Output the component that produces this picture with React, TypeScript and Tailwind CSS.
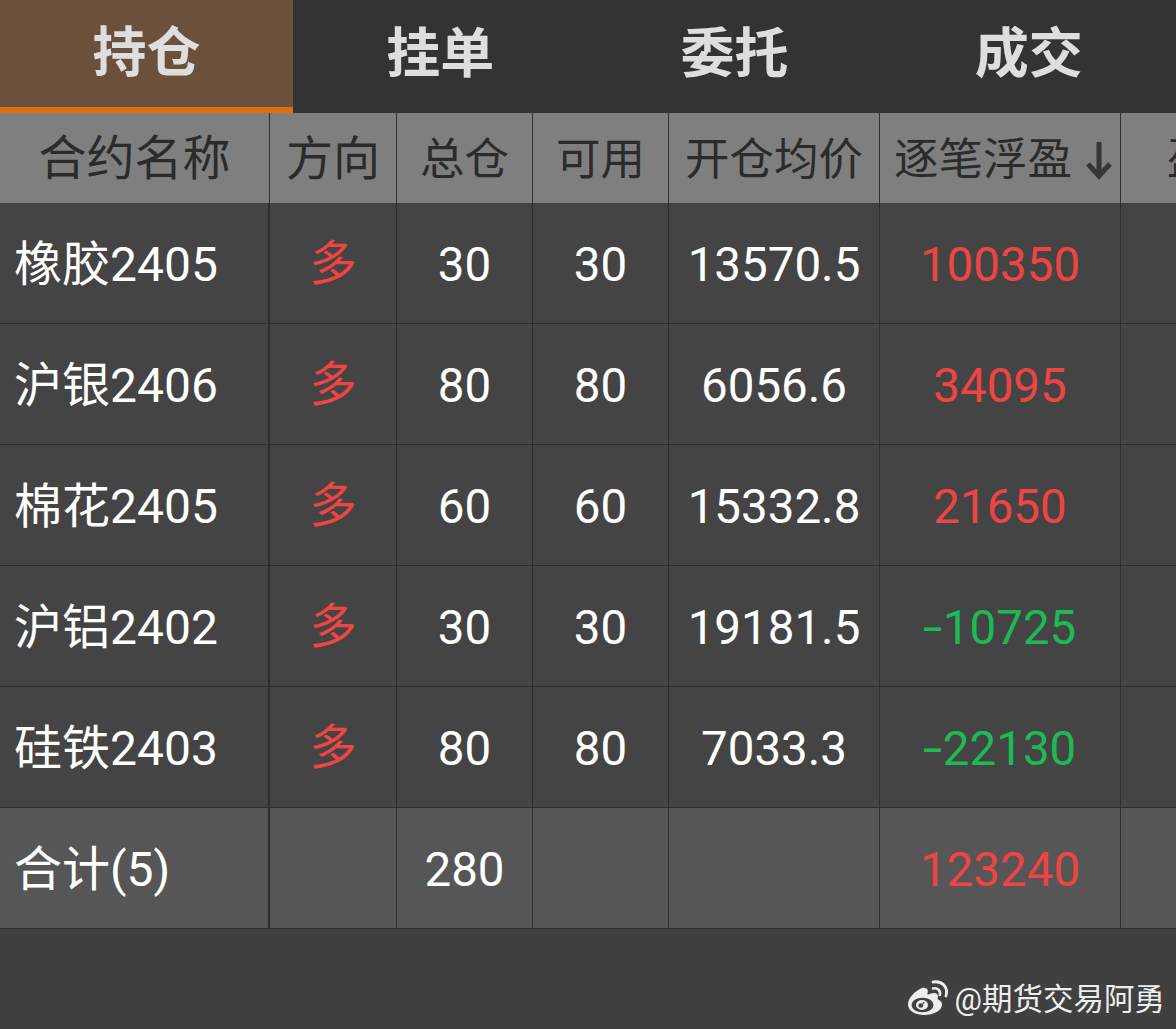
const cols = "grid grid-cols-[270px_127px_136px_136px_211px_241px_1fr]";
const font = { fontFamily: 'Roboto, "Noto Sans CJK SC", sans-serif' };

function Weibo() {
  return (
    <svg width="42" height="36" viewBox="0 0 42 36" className="shrink-0">
      <path d="M15 8C8 11 1 18 1 24.500c0 6.500 8 10.500 16 10.500 10 0 18-4.500 18-10.500 0-3-2.500-4.500-4.500-5.200 1-3 .5-5-1.500-6-2.500-1-5 0-8 1.200-.5.200-.8 0-.6-.6.700-2.500.4-4.400-.7-5.300C17.500 7.800 16.500 7.500 15 8Z" fill="#eeeeee" />
      <ellipse cx="15.500" cy="25" rx="11" ry="7.300" fill="#404040" />
      <ellipse cx="15" cy="25" rx="6" ry="5" fill="#eeeeee" />
      <ellipse cx="13.800" cy="25.500" rx="2.400" ry="2.200" fill="#404040" />
      <circle cx="16.500" cy="23" r="1" fill="#404040" />
      <path d="M26 8.500c4.500-1 8 2 6.800 6.500" stroke="#eeeeee" strokeWidth="2.600" fill="none" strokeLinecap="round" />
      <path d="M26 2c9-1.500 15.500 5 13 14" stroke="#eeeeee" strokeWidth="2.800" fill="none" strokeLinecap="round" />
    </svg>
  );
}

function Cell({ children, className = "" }: { children?: React.ReactNode; className?: string }) {
  return (
    <div className={`flex items-center justify-center border-r border-[#2e2e2e] whitespace-nowrap ${className}`}>
      {children}
    </div>
  );
}

function Pnl({ value }: { value: string }) {
  if (value.startsWith("-")) {
    return (
      <span>
        <span className="inline-block scale-x-150 ml-[2px] mr-[4px]">-</span>
        {value.slice(1)}
      </span>
    );
  }
  return <span>{value}</span>;
}

type Row = { name: string; total: string; avail: string; price: string; pnl: string; up: boolean };
const rows: Row[] = [
  { name: "橡胶2405", total: "30", avail: "30", price: "13570.5", pnl: "100350", up: true },
  { name: "沪银2406", total: "80", avail: "80", price: "6056.6", pnl: "34095", up: true },
  { name: "棉花2405", total: "60", avail: "60", price: "15332.8", pnl: "21650", up: true },
  { name: "沪铝2402", total: "30", avail: "30", price: "19181.5", pnl: "-10725", up: false },
  { name: "硅铁2403", total: "80", avail: "80", price: "7033.3", pnl: "-22130", up: false },
];

export default function App() {
  return (
    <div className="relative w-[1176px] h-[1029px] overflow-hidden bg-[#404040]" style={font}>
      <div className="grid grid-cols-[293px_1fr_1fr_1fr] h-[113px] bg-[#333333] text-[#dedede] text-[54px] font-bold">
        <div className="flex items-center justify-center bg-[#6b503b] border-b-[6px] border-[#e06c10]">持仓</div>
        <div className="flex items-center justify-center pb-[5px]">挂单</div>
        <div className="flex items-center justify-center pb-[5px]">委托</div>
        <div className="flex items-center justify-center pb-[5px]">成交</div>
      </div>

      <div className={`${cols} h-[90px] bg-[#7f7f7f] text-[#2b2b2b] text-[44.500px]`}>
        <Cell className="text-[48px] pt-[2px]">合约名称</Cell>
        <Cell className="text-[47px] pt-[2px]">方向</Cell>
        <Cell className="pt-[4px]">总仓</Cell>
        <Cell className="pt-[4px]">可用</Cell>
        <Cell className="pt-[4px]">开仓均价</Cell>
        <Cell className="pt-[4px] !justify-start pl-[14px] gap-[13px]">
          <span>逐笔浮盈</span>
          <svg width="28" height="42" viewBox="0 0 28 42">
            <path d="M14 3v33M3 25l11 12 11-12" stroke="#363636" strokeWidth="5" fill="none" />
          </svg>
        </Cell>
        <div className="overflow-hidden flex items-center pl-[46px] pt-[4px] whitespace-nowrap">盈亏</div>
      </div>

      {rows.map((r) => (
        <div key={r.name} className={`${cols} h-[121px] bg-[#444444] border-b border-[#2e2e2e] text-white text-[47.5px]`}>
          <Cell className="!justify-start pl-[14px] border-r-2 pt-[4px] text-[48px]">{r.name}</Cell>
          <Cell className="text-[#ef4444] pt-[4px]">多</Cell>
          <Cell className="pt-[5px]">{r.total}</Cell>
          <Cell className="pt-[5px]">{r.avail}</Cell>
          <Cell className="pt-[5px]">{r.price}</Cell>
          <Cell className={`pt-[5px] ${r.up ? "text-[#ef4444]" : "text-[#1db954]"}`}>
            <Pnl value={r.pnl} />
          </Cell>
          <div />
        </div>
      ))}

      <div className={`${cols} h-[121px] bg-[#565656] border-b border-[#2e2e2e] text-white text-[47.5px]`}>
        <Cell className="!justify-start pl-[14px] border-r-2 pt-[4px] text-[48px]">合计(5)</Cell>
        <Cell />
        <Cell className="pt-[5px]">280</Cell>
        <Cell />
        <Cell />
        <Cell className="text-[#ef4444] pt-[5px]">123240</Cell>
        <div />
      </div>

      <div className="absolute right-[11px] bottom-[11px] flex items-center gap-[6px] text-[#eeeeee] text-[30.500px] leading-[36px]">
        <Weibo />
        <span className="pt-[4px]">@期货交易阿勇</span>
      </div>
    </div>
  );
}
